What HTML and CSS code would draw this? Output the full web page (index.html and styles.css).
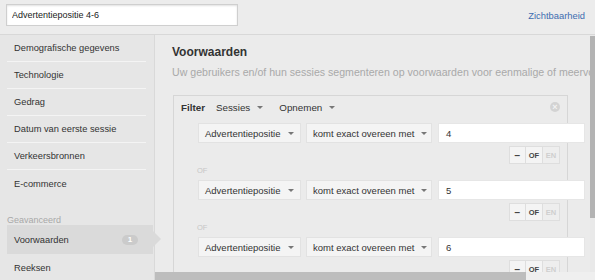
FILE: index.html
```html
<!DOCTYPE html>
<html lang="nl">
<head>
    <meta charset="UTF-8">
    <title>Segment</title>
    <link rel="stylesheet" href="styles.css">
</head>
<body>
    <div class="topbar">
        <input class="segment-name" type="text" value="Advertentiepositie 4-6">
        <a class="visibility" href="#">Zichtbaarheid</a>
    </div>
    <div class="layout">
        <ul class="side">
            <li class="side-item">Demografische gegevens</li>
            <li class="side-item">Technologie</li>
            <li class="side-item">Gedrag</li>
            <li class="side-item">Datum van eerste sessie</li>
            <li class="side-item">Verkeersbronnen</li>
            <li class="side-item last">E-commerce</li>
            <li class="side-heading">Geavanceerd</li>
            <li class="side-item selected">Voorwaarden <span class="badge">1</span></li>
            <li class="side-item last">Reeksen</li>
        </ul>
        <div class="main">
            <div class="viewport">
                <div class="content">
                    <h2 class="title">Voorwaarden</h2>
                    <p class="subtitle">Uw gebruikers en/of hun sessies segmenteren op voorwaarden voor eenmalige of meervoudige sessies</p>

                    <div class="filter-box">
                        <div class="filter-head">
                            <b>Filter</b>
                            <span class="menu">Sessies <i class="caret"></i></span>
                            <span class="menu">Opnemen <i class="caret"></i></span>
                            <span class="remove">&times;</span>
                        </div>

                        <div class="condition">
                            <div class="cond-row">
                                <div class="select dim">Advertentiepositie <i class="caret"></i></div>
                                <div class="select op">komt exact overeen met <i class="caret"></i></div>
                                <div class="value">4</div>
                            </div>
                            <div class="btn-row">
                                <span class="btn minus">&minus;</span><span class="btn">OF</span><span class="btn off">EN</span>
                            </div>
                        </div>
                        <div class="or-label">OF</div>

                        <div class="condition">
                            <div class="cond-row">
                                <div class="select dim">Advertentiepositie <i class="caret"></i></div>
                                <div class="select op">komt exact overeen met <i class="caret"></i></div>
                                <div class="value">5</div>
                            </div>
                            <div class="btn-row">
                                <span class="btn minus">&minus;</span><span class="btn">OF</span><span class="btn off">EN</span>
                            </div>
                        </div>
                        <div class="or-label">OF</div>

                        <div class="condition">
                            <div class="cond-row">
                                <div class="select dim">Advertentiepositie <i class="caret"></i></div>
                                <div class="select op">komt exact overeen met <i class="caret"></i></div>
                                <div class="value">6</div>
                            </div>
                            <div class="btn-row">
                                <span class="btn minus">&minus;</span><span class="btn">OF</span><span class="btn off">EN</span>
                            </div>
                        </div>
                    </div>
                </div>
            </div>
            <div class="vscroll"><div class="vthumb"></div></div>
            <div class="hscroll"><div class="hthumb"></div></div>
            <div class="corner"></div>
        </div>
    </div>
</body>
</html>
```

FILE: styles.css
```css
body {
    margin: 0;
    width: 595px;
    height: 280px;
    overflow: hidden;
    font-family: "Liberation Sans", Arial, sans-serif;
    color: #333;
    background-color: #ebebeb;
}
.topbar {
    display: flex;
    align-items: center;
    justify-content: space-between;
    height: 35px;
    box-sizing: border-box;
    padding: 0 10px 4px 6px;
    background-color: #ececec;
    border-bottom: 1px solid #d8d8d8;
}
.segment-name {
    width: 232px;
    height: 22px;
    box-sizing: border-box;
    border: 1px solid #cfcfcf;
    box-shadow: inset 0 1px 2px rgba(0, 0, 0, 0.12);
    padding: 0 5px;
    font-family: inherit;
    font-size: 9px;
    color: #222;
    outline: none;
}
.visibility {
    color: #3e6db0;
    font-size: 9.4px;
    text-decoration: none;
}
.layout {
    display: flex;
    height: 245px;
}
.side {
    list-style: none;
    margin: 0;
    padding: 0 0 0 7px;
    width: 155px;
    flex-shrink: 0;
    box-sizing: border-box;
    background-color: #e6e6e6;
    border-right: 1px solid #d9d9d9;
    position: relative;
    z-index: 2;
}
.side-item {
    display: flex;
    align-items: center;
    width: 139px;
    height: 27px;
    box-sizing: border-box;
    padding-left: 7px;
    border-bottom: 1px solid #f4f4f4;
    font-size: 9.3px;
    color: #333;
}
.side-item.last {
    border-bottom: none;
}
.side-heading {
    font-size: 9px;
    color: #a8a8a8;
    margin: 17px 0 0 -7px;
    padding-left: 7px;
    height: 11px;
    line-height: 12px;
}
.side-item.selected {
    width: 146px;
    height: 29px;
    background-color: #dadada;
    border-bottom: none;
    position: relative;
}
/* small pointer into the panel */
.side-item.selected::after {
    content: "";
    position: absolute;
    right: -8px;
    top: 6px;
    border-top: 8px solid transparent;
    border-bottom: 8px solid transparent;
    border-left: 8px solid #dadada;
}
.badge {
    margin-left: auto;
    margin-right: 15px;
    width: 16px;
    height: 10px;
    border-radius: 5px;
    background-color: #cbcbcb;
    color: #fff;
    font-size: 8px;
    font-weight: bold;
    text-align: center;
    line-height: 10px;
}
/* panel with its own scrollbars */
.main {
    flex: 1;
    display: grid;
    grid-template-columns: 1fr 5px;
    grid-template-rows: 1fr 8px;
    min-width: 0;
    background-color: #ebebeb;
}
.viewport {
    overflow: hidden;
    min-width: 0;
    min-height: 0;
}
.vscroll {
    background-color: #e9e9e9;
}
.vthumb {
    margin-top: 1px;
    height: 182px;
    background-color: #b3b3b3;
}
.hscroll {
    background-color: #efefef;
}
.hthumb {
    width: 371px;
    height: 8px;
    background-color: #bdbdbd;
}
.corner {
    background-color: #efefef;
}
.content {
    width: 510px;
    box-sizing: border-box;
    padding: 9px 0 0 17px;
    white-space: nowrap;
}
.title {
    margin: 0;
    font-size: 12px;
    line-height: 16px;
    color: #333;
}
.subtitle {
    margin: 5px 0 0;
    font-size: 10.6px;
    line-height: 14px;
    color: #a9a9a9;
}
.filter-box {
    margin: 16px 0 0 1px;
    width: 395px;
    height: 240px;
    box-sizing: border-box;
    border: 1px solid #d6d6d6;
}
.filter-head {
    display: flex;
    align-items: center;
    height: 22px;
    padding: 0 7px;
    font-size: 9.8px;
    color: #333;
}
.filter-head b {
    margin-right: 11px;
}
.menu {
    display: flex;
    align-items: center;
    margin-right: 16px;
}
.caret {
    display: inline-block;
    width: 0;
    height: 0;
    margin-left: 7px;
    border-left: 3px solid transparent;
    border-right: 3px solid transparent;
    border-top: 3px solid #777;
}
.remove {
    margin-left: auto;
    width: 10px;
    height: 10px;
    border-radius: 50%;
    background-color: #d3d3d3;
    color: #f2f2f2;
    font-size: 9px;
    line-height: 10px;
    text-align: center;
    font-weight: bold;
}
.condition {
    margin-top: 5px;
}
.cond-row {
    display: flex;
    height: 20px;
    padding-left: 24px;
    font-size: 9.5px;
}
.select {
    display: flex;
    align-items: center;
    justify-content: space-between;
    flex-shrink: 0;
    box-sizing: border-box;
    padding: 0 6px;
    background-color: #f4f4f4;
    border: 1px solid #e2e2e2;
    color: #333;
}
.select.dim {
    width: 103px;
}
.select.op {
    width: 126px;
    margin-left: 5px;
}
.value {
    width: 147px;
    flex-shrink: 0;
    margin-left: 6px;
    box-sizing: border-box;
    padding-left: 7px;
    display: flex;
    align-items: center;
    background-color: #fff;
    border: 1px solid #e6e6e6;
    color: #333;
}
.btn-row {
    display: flex;
    justify-content: flex-end;
    margin-top: 3px;
    padding-right: 7px;
}
.btn {
    width: 18px;
    height: 18px;
    box-sizing: border-box;
    display: flex;
    align-items: center;
    justify-content: center;
    background-color: #f4f4f4;
    border: 1px solid #dedede;
    margin-left: -1px;
    font-size: 7.5px;
    font-weight: bold;
    color: #444;
}
.btn.minus {
    width: 17px;
    font-size: 10px;
}
.btn.off {
    color: #cfcfcf;
    background-color: #eeeeee;
}
.or-label {
    height: 14px;
    line-height: 14px;
    padding-left: 23px;
    font-size: 7.5px;
    color: #c6c6c6;
    margin-bottom: -3px;
}
```
